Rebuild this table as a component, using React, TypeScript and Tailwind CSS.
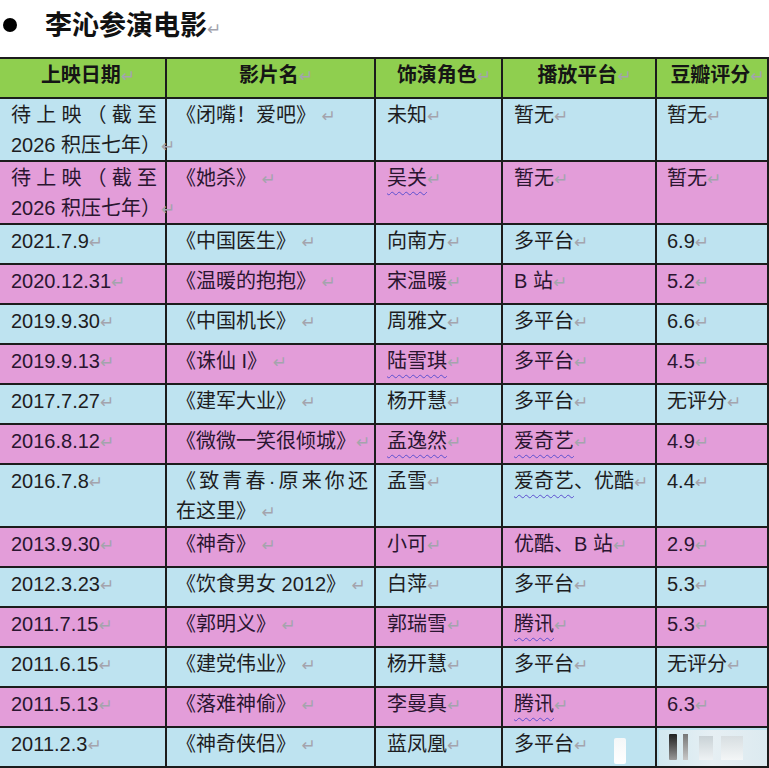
import React from "react";

const FONT = "font-['Liberation_Sans','Noto_Sans_CJK_SC',sans-serif]";

function Mark() {
  return (
    <span className="font-['DejaVu_Sans',sans-serif] text-[17px] leading-[0] text-[#a4a4ad] font-normal">↵</span>
  );
}

function Wavy({ children }: { children: React.ReactNode }) {
  return (
    <span className="underline decoration-wavy decoration-[#5b50cf] decoration-1 underline-offset-[6px]">
      {children}
    </span>
  );
}

type Row = {
  date: React.ReactNode;
  film: React.ReactNode;
  role: React.ReactNode;
  platform: React.ReactNode;
  score: React.ReactNode;
  pink: boolean;
};

const pending = (
  <div className="pr-[8px]">
    <div className="[text-align-last:justify]">待上映（截至</div>
    <div className="whitespace-nowrap -mr-[14px]">
      2026 积压七年）<Mark />
    </div>
  </div>
);

const rows: Row[] = [
  { date: pending, film: <>《闭嘴！爱吧》 <Mark /></>, role: <>未知<Mark /></>, platform: <>暂无<Mark /></>, score: <>暂无<Mark /></>, pink: false },
  { date: pending, film: <>《她杀》 <Mark /></>, role: <><Wavy>吴关</Wavy><Mark /></>, platform: <>暂无<Mark /></>, score: <>暂无<Mark /></>, pink: true },
  { date: <>2021.7.9<Mark /></>, film: <>《中国医生》 <Mark /></>, role: <>向南方<Mark /></>, platform: <>多平台<Mark /></>, score: <>6.9<Mark /></>, pink: false },
  { date: <>2020.12.31<Mark /></>, film: <>《温暖的抱抱》 <Mark /></>, role: <>宋温暖<Mark /></>, platform: <>B 站<Mark /></>, score: <>5.2<Mark /></>, pink: true },
  { date: <>2019.9.30<Mark /></>, film: <>《中国机长》 <Mark /></>, role: <>周雅文<Mark /></>, platform: <>多平台<Mark /></>, score: <>6.6<Mark /></>, pink: false },
  { date: <>2019.9.13<Mark /></>, film: <>《诛仙 I》 <Mark /></>, role: <><Wavy>陆雪琪</Wavy><Mark /></>, platform: <>多平台<Mark /></>, score: <>4.5<Mark /></>, pink: true },
  { date: <>2017.7.27<Mark /></>, film: <>《建军大业》 <Mark /></>, role: <>杨开慧<Mark /></>, platform: <>多平台<Mark /></>, score: <>无评分<Mark /></>, pink: false },
  { date: <>2016.8.12<Mark /></>, film: <>《微微一笑很倾城》<Mark /></>, role: <><Wavy>孟逸然</Wavy><Mark /></>, platform: <><Wavy>爱奇艺</Wavy><Mark /></>, score: <>4.9<Mark /></>, pink: true },
  {
    date: <>2016.7.8<Mark /></>,
    film: (
      <div className="pr-[6px]">
        <div className="[text-align-last:justify] whitespace-nowrap">《致青春·原来你还</div>
        <div>
          在这里》 <Mark />
        </div>
      </div>
    ),
    role: <>孟雪<Mark /></>,
    platform: <span className="whitespace-nowrap"><Wavy>爱奇艺</Wavy>、优酷<Mark /></span>,
    score: <>4.4<Mark /></>,
    pink: false,
  },
  { date: <>2013.9.30<Mark /></>, film: <>《神奇》 <Mark /></>, role: <>小可<Mark /></>, platform: <>优酷、B 站<Mark /></>, score: <>2.9<Mark /></>, pink: true },
  { date: <>2012.3.23<Mark /></>, film: <>《饮食男女 2012》 <Mark /></>, role: <>白萍<Mark /></>, platform: <>多平台<Mark /></>, score: <>5.3<Mark /></>, pink: false },
  { date: <>2011.7.15<Mark /></>, film: <>《郭明义》 <Mark /></>, role: <>郭瑞雪<Mark /></>, platform: <><Wavy>腾讯</Wavy><Mark /></>, score: <>5.3<Mark /></>, pink: true },
  { date: <>2011.6.15<Mark /></>, film: <>《建党伟业》 <Mark /></>, role: <>杨开慧<Mark /></>, platform: <>多平台<Mark /></>, score: <>无评分<Mark /></>, pink: false },
  { date: <>2011.5.13<Mark /></>, film: <>《落难神偷》 <Mark /></>, role: <>李曼真<Mark /></>, platform: <><Wavy>腾讯</Wavy><Mark /></>, score: <>6.3<Mark /></>, pink: true },
  { date: <>2011.2.3<Mark /></>, film: <>《神奇侠侣》 <Mark /></>, role: <>蓝凤凰<Mark /></>, platform: <>多平台<Mark /></>, score: <></>, pink: false },
];

const GRID = "grid grid-cols-[167px_209px_127px_154px_112px]";
const CELL = "border-r-2 border-[#1c1c1c] min-w-0";

export default function App() {
  return (
    <div className={`w-[769px] h-[768px] bg-white overflow-hidden text-[#1d1d1f] ${FONT}`}>
      {/* Title */}
      <div className="h-[57px] flex items-start pt-[8px] pl-[3px]">
        <span className="mt-[10px] w-[14px] h-[14px] rounded-full bg-black shrink-0" />
        <span className="ml-[28px] text-[27px] font-bold leading-[36px] text-[#111]">
          李沁参演电影<Mark />
        </span>
      </div>

      {/* Table */}
      <div className="relative border-t-2 border-[#1c1c1c] text-[20px]">
        <div className={`${GRID} bg-[#8fcf4f] border-b-2 border-[#1c1c1c] font-bold leading-[30px] text-[#151515]`}>
          {["上映日期", "影片名", "饰演角色", "播放平台", "豆瓣评分"].map((h) => (
            <div key={h} className={`${CELL} h-[38px] pt-[1px] pl-[11px] text-center whitespace-nowrap`}>
              {h}
              <Mark />
            </div>
          ))}
        </div>

        {rows.map((r, i) => (
          <div
            key={i}
            className={`${GRID} border-b-2 border-[#1c1c1c] leading-[30px] ${
              r.pink ? "bg-[#e39dd9] text-[#2a1530]" : "bg-[#bee3f0]"
            }`}
          >
            <div className={`${CELL} min-h-[38px] pt-[1px] pl-[11px]`}>{r.date}</div>
            <div className={`${CELL} min-h-[38px] pt-[1px] pl-[9px]`}>{r.film}</div>
            <div className={`${CELL} min-h-[38px] pt-[1px] pl-[11px]`}>{r.role}</div>
            <div className={`${CELL} min-h-[38px] pt-[1px] pl-[11px]`}>{r.platform}</div>
            <div className={`${CELL} min-h-[38px] pt-[1px] pl-[10px]`}>{r.score}</div>
          </div>
        ))}

        {/* watermark artefact over the last cells */}
        <div className="absolute right-0 bottom-[2px] w-[158px] h-[36px] pointer-events-none">
          <div className="absolute left-[3px] top-[8px] w-[12px] h-[26px] bg-gradient-to-b from-[#f4f7f8] to-[#ffffff] rounded-[2px]" />
          <div className="absolute left-[48px] top-0 w-[108px] h-[36px] bg-gradient-to-r from-[#d2e8f0] via-[#e6eff3] to-[#dceaf0]" />
          <div className="absolute left-[58px] top-[4px] w-[8px] h-[26px] bg-gradient-to-b from-[#222] to-[#9a9a9a] rounded-[1px]" />
          <div className="absolute left-[72px] top-[4px] w-[5px] h-[26px] bg-gradient-to-b from-[#777] to-[#c8c8c8]" />
          <div className="absolute left-[88px] top-[6px] w-[14px] h-[24px] bg-gradient-to-b from-[#c9d2d6] to-[#eef2f4]" />
          <div className="absolute left-[110px] top-[6px] w-[22px] h-[24px] bg-gradient-to-b from-[#d7dee1] to-[#f3f6f7]" />
        </div>
      </div>
    </div>
  );
}
